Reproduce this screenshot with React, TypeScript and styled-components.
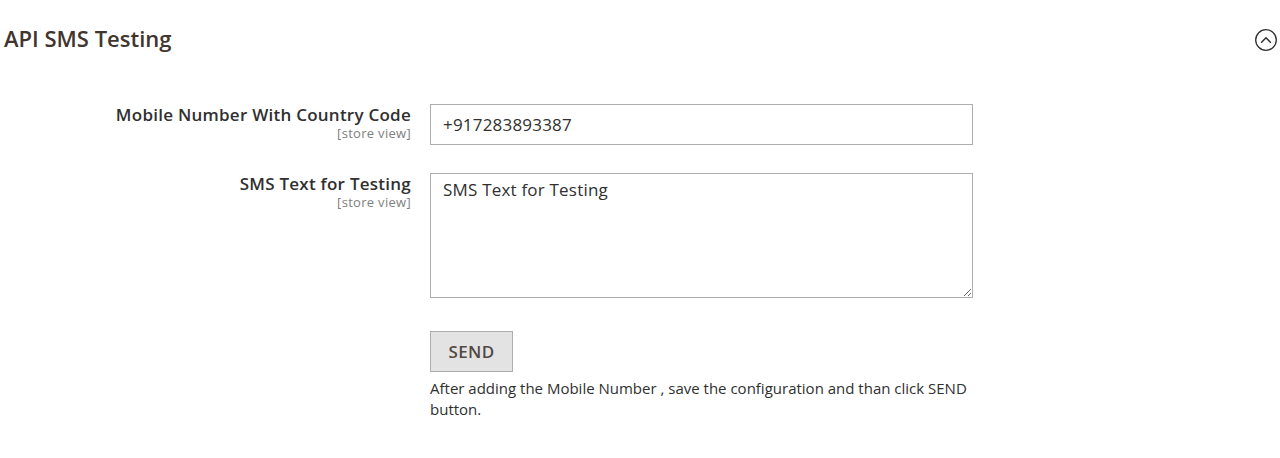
import React from 'react';
import { createGlobalStyle, styled } from 'styled-components';

const GlobalStyle = createGlobalStyle`
  body {
    margin: 0;
    background: #ffffff;
    font-family: 'Open Sans', 'Liberation Sans', sans-serif;
    color: #303030;
  }
`;

const App: React.FC = () => {
  return (
    <>
      <GlobalStyle />
      <Section>
        <SectionHeader>
          <Title>API SMS Testing</Title>
          <ToggleButton aria-label='Collapse'>
            <svg width='24' height='24' viewBox='0 0 24 24' fill='none'>
              <circle cx='12' cy='12' r='10.3' stroke='#303030' strokeWidth='1.3' />
              <path d='M7.6 14.2 L12 9.8 L16.4 14.2' stroke='#303030' strokeWidth='1.5' strokeLinecap='round' strokeLinejoin='round' />
            </svg>
          </ToggleButton>
        </SectionHeader>

        <FieldGrid>
          <Label>
            <strong>Mobile Number With Country Code</strong>
            <span>[store view]</span>
          </Label>
          <Control>
            <TextInput type='text' defaultValue='+917283893387' />
          </Control>

          <Label $top={28}>
            <strong>SMS Text for Testing</strong>
            <span>[store view]</span>
          </Label>
          <Control $top={28}>
            <TextArea defaultValue='SMS Text for Testing' />
          </Control>

          <Label $top={33} />
          <Control $top={33}>
            <SendButton type='button'>SEND</SendButton>
            <Note>After adding the Mobile Number , save the configuration and than click SEND button.</Note>
          </Control>
        </FieldGrid>
      </Section>
    </>
  );
};

const Section = styled.section`
  width: 1280px;
  padding: 21px 0 30px;
`;

const SectionHeader = styled.div`
  display: flex;
  justify-content: space-between;
  align-items: center;
  padding: 0 1px 0 4px;
  height: 34px;
`;

const Title = styled.h2`
  margin: 0;
  font-size: 22px;
  font-weight: 600;
  color: #41362f;
`;

const ToggleButton = styled.button`
  display: flex;
  align-items: center;
  justify-content: center;
  width: 26px;
  height: 26px;
  padding: 0;
  margin-top: 4px;
  border: none;
  background: transparent;
`;

const FieldGrid = styled.div`
  display: grid;
  grid-template-columns: 411px 543px;
  column-gap: 19px;
  margin-top: 49px;
`;

const Label = styled.label<{ $top?: number }>`
  display: flex;
  flex-direction: column;
  align-items: flex-end;
  text-align: right;
  margin-top: ${(p) => p.$top ?? 0}px;

  strong {
    font-size: 17px;
    font-weight: 600;
    letter-spacing: 0.25px;
    line-height: 22px;
    color: #303030;
  }

  span {
    font-size: 13px;
    letter-spacing: 0.3px;
    line-height: 15px;
    color: #808080;
  }
`;

const Control = styled.div<{ $top?: number }>`
  margin-top: ${(p) => p.$top ?? 0}px;
`;

const TextInput = styled.input`
  display: block;
  box-sizing: border-box;
  width: 543px;
  height: 41px;
  padding: 0 12px;
  border: 1px solid #adadad;
  border-radius: 0;
  font-family: 'Open Sans', 'Liberation Sans', sans-serif;
  font-size: 17px;
  letter-spacing: 0.2px;
  color: #303030;
  outline: none;
`;

const TextArea = styled.textarea`
  display: block;
  box-sizing: border-box;
  width: 543px;
  height: 125px;
  padding: 4px 12px;
  border: 1px solid #adadad;
  border-radius: 0;
  font-family: 'Open Sans', 'Liberation Sans', sans-serif;
  font-size: 17px;
  letter-spacing: 0.2px;
  line-height: 24px;
  color: #303030;
  outline: none;
  resize: both;
`;

const SendButton = styled.button`
  display: block;
  box-sizing: border-box;
  width: 83px;
  height: 41px;
  padding: 0;
  border: 1px solid #adadad;
  background: #e3e3e3;
  font-family: 'Open Sans', 'Liberation Sans', sans-serif;
  font-size: 17px;
  font-weight: 600;
  letter-spacing: 0.3px;
  color: #514943;
`;

const Note = styled.p`
  margin: 6px 0 0;
  font-size: 15px;
  line-height: 21px;
  color: #303030;
`;

export default App;
